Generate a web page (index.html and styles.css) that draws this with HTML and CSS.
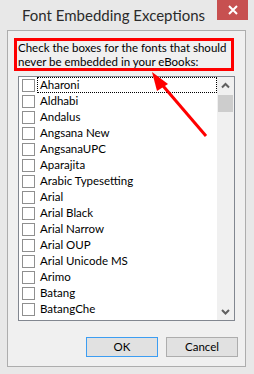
FILE: index.html
```html
<!DOCTYPE html>
<html lang="en">
<head>
    <meta charset="UTF-8">
    <title>Font Embedding Exceptions</title>
    <link rel="stylesheet" href="styles.css">
</head>
<body>
    <div class="window">
        <div class="titlebar">
            <div class="title">Font Embedding Exceptions</div>
            <div class="close">
                <svg width="10" height="10" viewBox="0 0 10 10"><path d="M1 1L9 9M9 1L1 9" stroke="#fff" stroke-width="2"/></svg>
            </div>
        </div>
        <div class="client">
            <div class="label">Check the boxes for the fonts that should<br>never be embedded in your eBooks:</div>
            <div class="listbox">
                <div class="items">
                    <div class="item focus"><span class="check"></span><span class="name">Aharoni</span></div>
                    <div class="item"><span class="check"></span><span class="name">Aldhabi</span></div>
                    <div class="item"><span class="check"></span><span class="name">Andalus</span></div>
                    <div class="item"><span class="check"></span><span class="name">Angsana New</span></div>
                    <div class="item"><span class="check"></span><span class="name">AngsanaUPC</span></div>
                    <div class="item"><span class="check"></span><span class="name">Aparajita</span></div>
                    <div class="item"><span class="check"></span><span class="name">Arabic Typesetting</span></div>
                    <div class="item"><span class="check"></span><span class="name">Arial</span></div>
                    <div class="item"><span class="check"></span><span class="name">Arial Black</span></div>
                    <div class="item"><span class="check"></span><span class="name">Arial Narrow</span></div>
                    <div class="item"><span class="check"></span><span class="name">Arial OUP</span></div>
                    <div class="item"><span class="check"></span><span class="name">Arial Unicode MS</span></div>
                    <div class="item"><span class="check"></span><span class="name">Arimo</span></div>
                    <div class="item"><span class="check"></span><span class="name">Batang</span></div>
                    <div class="item"><span class="check"></span><span class="name">BatangChe</span></div>
                </div>
                <div class="scrollbar">
                    <svg class="arrow" width="17" height="17" viewBox="0 0 17 17"><path d="M5 10.5L8.5 7L12 10.5" fill="none" stroke="#606060" stroke-width="2"/></svg>
                    <div class="track"><div class="thumb"></div></div>
                    <svg class="arrow" width="17" height="17" viewBox="0 0 17 17"><path d="M5 7L8.5 10.5L12 7" fill="none" stroke="#606060" stroke-width="2"/></svg>
                </div>
            </div>
            <div class="buttons">
                <button class="btn default">OK</button>
                <button class="btn">Cancel</button>
            </div>
        </div>
        <svg class="annotation" width="254" height="374" viewBox="0 0 254 374">
            <line x1="206" y1="136" x2="158" y2="80" stroke="#f00" stroke-width="3"/>
            <polygon points="152,72 168,84 157,91" fill="#f00"/>
        </svg>
    </div>
</body>
</html>
```

FILE: styles.css
```css
body {
    margin: 0;
    font-family: Lato, sans-serif;
    font-size: 11.5px;
    color: #000;
    background: #fff;
}
.window {
    position: relative;
    width: 254px;
    height: 374px;
    box-sizing: border-box;
    padding: 0 8px 7px 7px;
    background: #e8e8e8;
    display: flex;
    flex-direction: column;
}
.titlebar {
    height: 30px;
    display: flex;
    align-items: flex-start;
}
.title {
    padding: 6px 0 0 15px;
    font-size: 15px;
    line-height: 18px;
    color: #2b2b2b;
    flex: 1;
    white-space: nowrap;
}
.close {
    width: 31px;
    height: 20px;
    margin-right: -2px;
    background: #c75050;
    display: flex;
    align-items: center;
    justify-content: center;
}
.client {
    flex: 1;
    background: #f0f0f0;
    border: 1px solid #adadad;
    display: flex;
    flex-direction: column;
}
.label {
    margin: 7px 0 0 6px;
    width: 213px;
    height: 27px;
    border: 3px solid #f00;
    padding: 0 0 0 1px;
    line-height: 13.5px;
    white-space: nowrap;
}
.listbox {
    margin: 5px 0 0 10px;
    width: 217px;
    height: 245px;
    box-sizing: border-box;
    border: 1px solid #828790;
    background: #fff;
    display: flex;
}
.items {
    flex: 1;
}
.item {
    height: 16px;
    display: flex;
    align-items: center;
    padding-left: 3px;
}
.check {
    width: 13px;
    height: 13px;
    box-sizing: border-box;
    border: 1px solid #8f8f8f;
    background: #fff;
    flex: none;
}
.name {
    flex: 1;
    height: 16px;
    line-height: 14px;
    margin-left: 2px;
    padding-left: 2px;
    box-sizing: border-box;
    border: 1px solid transparent;
}
.focus .name {
    border: 1px dotted #000;
}
.scrollbar {
    width: 17px;
    background: #f0f0f0;
    display: flex;
    flex-direction: column;
}
.arrow {
    display: block;
    flex: none;
}
.track {
    flex: 1;
    padding: 1px;
}
.thumb {
    height: 17px;
    background: #cdcdcd;
}
.buttons {
    margin: 16px 7px 0 0;
    display: flex;
    justify-content: flex-end;
    gap: 8px;
}
.btn {
    width: 72px;
    height: 20px;
    box-sizing: border-box;
    border: 1px solid #adadad;
    background: #e1e1e1;
    font-family: Lato, sans-serif;
    font-size: 11.5px;
    line-height: 16px;
    padding: 0;
    color: #000;
}
.btn.default {
    border-color: #3c9df2;
}
.annotation {
    position: absolute;
    left: 0;
    top: 0;
    pointer-events: none;
}
```
